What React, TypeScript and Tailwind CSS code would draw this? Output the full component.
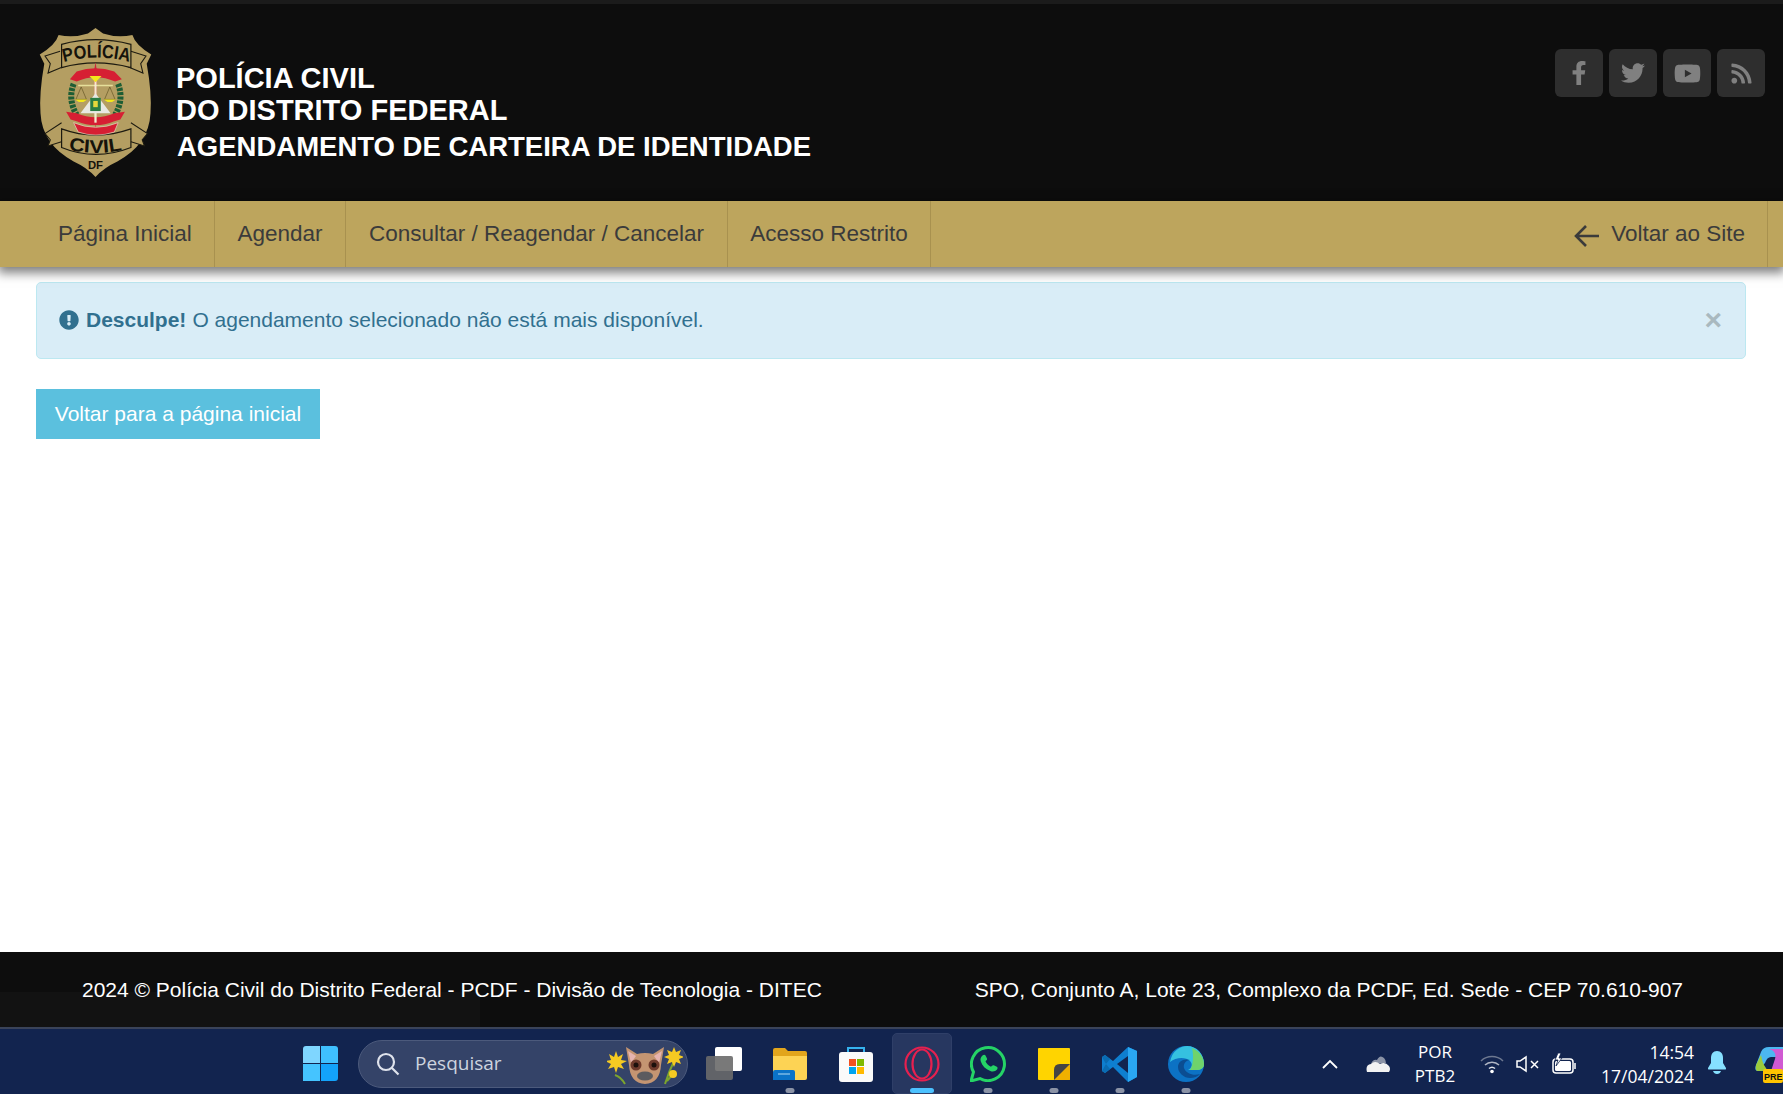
import React from "react";
import { FaFacebookF, FaTwitter, FaYoutube, FaRss, FaExclamationCircle } from "react-icons/fa";

function Badge() {
  return (
    <svg width="113" height="149" viewBox="0 0 150 192" preserveAspectRatio="none" className="block shrink-0">
      <defs>
        <path id="arc-top" d="M33 44 Q76 32 121 44" />
        <path id="arc-bottom" d="M39 157 Q76 165 112 157" />
      </defs>
      <path d="M75 0 L85 7 Q104 13 124 9 Q128 22 149 34 L143 46 Q150 84 148 110 Q146 150 104 172 Q86 180 75 192 Q64 180 46 172 Q4 150 2 110 Q0 84 7 46 L1 34 Q22 22 26 9 Q46 13 65 7 Z" fill="#b49e62" />
      <path d="M28 30 L8 36 L15 46 L12 58 L32 50 M122 30 L142 36 L135 46 L138 58 L118 50" fill="#b49e62" stroke="#1c1a10" strokeWidth="1.4" />
      <path d="M30 21 Q75 9 122 21 L122 51 Q75 39 30 51 Z" fill="#b49e62" stroke="#1c1a10" strokeWidth="1.6" />
      <text fontFamily="Liberation Sans" fontWeight="700" fontSize="24" fill="#15130b">
        <textPath href="#arc-top" textLength="88" lengthAdjust="spacingAndGlyphs">POLÍCIA</textPath>
      </text>
      <path d="M30 122 L8 136 L15 144 L12 152 L32 146 M122 122 L144 136 L137 144 L140 152 L120 146" fill="#b49e62" stroke="#1c1a10" strokeWidth="1.4" />
      <path d="M30 130 Q75 146 122 130 L122 154 Q75 172 30 154 Z" fill="#b49e62" stroke="#1c1a10" strokeWidth="1.6" />
      <text fontFamily="Liberation Sans" fontWeight="700" fontSize="24" fill="#15130b">
        <textPath href="#arc-bottom" textLength="72" lengthAdjust="spacingAndGlyphs">CIVIL</textPath>
      </text>
      <text x="75" y="182" textAnchor="middle" fontFamily="Liberation Sans" fontWeight="700" fontSize="15" fill="#15130b">DF</text>
      <path d="M46 72 Q38 92 50 112" fill="none" stroke="#1d5d34" strokeWidth="8" strokeDasharray="4 1.5" />
      <path d="M105 72 Q113 92 101 112" fill="none" stroke="#1d5d34" strokeWidth="8" strokeDasharray="4 1.5" />
      <path d="M75 44 L77 56 L75 140 L73 56 Z" fill="#c9273a" />
      <path d="M41 66 L50 56 Q75 48 100 56 L110 66 L101 69 Q75 58 50 69 Z" fill="#d61f33" />
      <path d="M36 108 L50 110 Q75 120 100 110 L114 108 L108 118 L100 120 Q75 130 50 120 L42 118 Z" fill="#d61f33" />
      <path d="M46 122 Q75 134 105 122 L100 134 Q75 142 52 134 Z" fill="#d61f33" stroke="#e9e1cd" strokeWidth="0.8" />
      <path d="M52 74 L98 74" stroke="#e5df9a" strokeWidth="2" />
      <path d="M75 62 L75 122" stroke="#f3eecd" strokeWidth="3" />
      <path d="M56 76 L49 92 L63 92 Z M94 76 L87 92 L101 92 Z" fill="none" stroke="#5a4d1e" strokeWidth="0.8" />
      <path d="M48 92 Q56 99 64 92 Z M86 92 Q94 99 102 92 Z" fill="#f2e81a" />
      <path d="M75 84 L95 110 L55 110 Z" fill="#e8e8e2" />
      <rect x="68" y="90" width="14" height="17" fill="#2a7d43" />
      <rect x="72" y="94" width="6" height="8" fill="#e6d83c" />
      <path d="M67 62 L83 62 L75 70 Z" fill="#f2e81a" />
    </svg>
  );
}

function Dot() {
  return <span className="absolute bottom-[1px] left-1/2 -translate-x-1/2 w-[9px] h-[5px] rounded-full bg-[#8b93a6]" />;
}

function Slot({ children, dot }: { children: React.ReactNode; dot?: boolean }) {
  return (
    <div className="relative w-[66px] h-full flex items-center justify-center">
      {children}
      {dot && <Dot />}
    </div>
  );
}

export default function App() {
  const nav = [
    { label: "Página Inicial", w: "w-[215px] pl-[58px]" },
    { label: "Agendar", w: "w-[131px] justify-center" },
    { label: "Consultar / Reagendar / Cancelar", w: "w-[382px] justify-center" },
    { label: "Acesso Restrito", w: "w-[203px] justify-center" },
  ];
  return (
    <div className="h-screen w-full flex flex-col overflow-hidden bg-white font-['Liberation_Sans',Arial,sans-serif]">
      <header className="h-[201px] shrink-0 bg-[#0d0d0d] border-t-[4px] border-[#1b1b1b] flex justify-between">
        <div className="flex items-start pl-[39px] pt-[24px]">
          <Badge />
          <div className="ml-[24px] pt-[34px] text-white font-bold">
            <div className="text-[29px] leading-[32px] whitespace-nowrap">POLÍCIA CIVIL</div>
            <div className="text-[29px] leading-[32px] whitespace-nowrap">DO DISTRITO FEDERAL</div>
            <div className="text-[27.5px] leading-[32px] mt-[5px] ml-[1px] whitespace-nowrap">AGENDAMENTO DE CARTEIRA DE IDENTIDADE</div>
          </div>
        </div>
        <div className="flex gap-[6px] pt-[45px] pr-[18px]">
          <a className="w-[48px] h-[48px] rounded-[6px] bg-[#2e2e2e] flex items-center justify-center text-[#808080] text-[24px]"><FaFacebookF /></a>
          <a className="w-[48px] h-[48px] rounded-[6px] bg-[#2e2e2e] flex items-center justify-center text-[#808080] text-[24px]"><FaTwitter /></a>
          <a className="w-[48px] h-[48px] rounded-[6px] bg-[#2e2e2e] flex items-center justify-center text-[#808080] text-[27px]"><FaYoutube /></a>
          <a className="w-[48px] h-[48px] rounded-[6px] bg-[#2e2e2e] flex items-center justify-center text-[#808080] text-[23px]"><FaRss /></a>
        </div>
      </header>

      <nav className="h-[66px] shrink-0 bg-[#bda55d] flex justify-between shadow-[0_4px_10px_2px_rgba(0,0,0,0.5)] text-[#3b3b3b] text-[22.5px] relative">
        <div className="flex">
          {nav.map((n) => (
            <a key={n.label} className={`${n.w} flex items-center border-r border-[#a8914f] whitespace-nowrap`}>
              {n.label}
            </a>
          ))}
        </div>
        <a className="flex items-center border-r border-[#a8914f] mr-[15px] pr-[22px] whitespace-nowrap">
          <svg width="26" height="24" viewBox="0 0 26 24" fill="none" stroke="#3b3b3b" strokeWidth="2.6" className="mr-[11px] mt-[3px]">
            <path d="M25 12H2M12 2L2 12l10 10" />
          </svg>
          Voltar ao Site
        </a>
      </nav>

      <main className="flex-1 pl-[36px] pr-[37px] pt-[15px]">
        <div className="h-[77px] rounded-[5px] bg-[#d9edf7] border border-[#bce8f1] text-[#31708f] text-[21px] flex items-center pb-[2px] pl-[22px] pr-[23px]">
          <FaExclamationCircle className="text-[20px] mr-[7px] shrink-0" />
          <b>Desculpe!</b>
          <span className="ml-[6px]">O agendamento selecionado não está mais disponível.</span>
          <span className="ml-auto text-[#a9b9bf] text-[30px] font-bold leading-none">×</span>
        </div>
        <a className="mt-[30px] inline-flex items-center h-[50px] w-[284px] justify-center bg-[#5bc0de] text-white text-[21px]">
          Voltar para a página inicial
        </a>
      </main>

      <footer className="relative h-[75px] shrink-0 bg-[#0d0d0d] text-white text-[21px] flex items-center">
        <span className="absolute left-0 bottom-0 w-[480px] h-[35px] bg-[#121212]" />
        <span className="relative ml-[82px] whitespace-nowrap">2024 © Polícia Civil do Distrito Federal - PCDF - Divisão de Tecnologia - DITEC</span>
        <span className="relative ml-auto mr-[100px] whitespace-nowrap">SPO, Conjunto A, Lote 23, Complexo da PCDF, Ed. Sede - CEP 70.610-907</span>
      </footer>

      <div className="h-[67px] shrink-0 bg-[#12244f] border-t-[2px] border-[#3a4359] pt-[4px] flex items-center text-white font-['Open_Sans','Noto_Sans',sans-serif] relative">
        <div className="ml-[303px] w-[35px] h-[35px] grid grid-cols-2 gap-[1.5px] shrink-0">
          <span className="bg-[#7fd6ff] rounded-tl-[3px]" />
          <span className="bg-[#3fc0ff] rounded-tr-[3px]" />
          <span className="bg-[#45c4ff]" />
          <span className="bg-[#13a3fb] rounded-br-[3px]" />
        </div>
        <div className="ml-[20px] w-[330px] h-[48px] rounded-full bg-[#344368] border border-[#4c5a7c] flex items-center pl-[17px] relative shrink-0">
          <svg width="24" height="24" viewBox="0 0 24 24" fill="none" stroke="#dfe3ec" strokeWidth="2.2">
            <circle cx="10" cy="10" r="8" />
            <path d="M16 16l6.5 6.5" />
          </svg>
          <span className="ml-[15px] text-[19px] text-[#cdd3df]">Pesquisar</span>
          <svg width="76" height="42" viewBox="0 0 76 42" className="absolute right-[4px] top-[2px]">
            <path d="M8 32Q14 34 18 41M68 16Q62 28 58 41M66 31L60 38" fill="none" stroke="#7da52d" strokeWidth="2" />
            <g fill="#f5ca22">
              <path d="M9 8l2 6 5-3-2 6 6 1-6 3 3 5-6-2-2 6-2-6-6 2 3-5-6-3 6-1-2-6 5 3z" />
              <circle cx="9" cy="19" r="5" />
              <path d="M67 4l2 5 5-2-2 5 5 2-5 2 2 5-5-2-2 5-2-5-5 2 2-5-5-2 5-2-2-5 5 2z" />
              <circle cx="67" cy="14" r="5" />
              <circle cx="66" cy="31" r="4" />
            </g>
            <path d="M19 4L30 11Q38 9 46 11L57 4L54 22Q53 40 38 41Q23 40 22 22Z" fill="#c49572" />
            <path d="M21 8L29 13L24 20ZM55 8L47 13L52 20Z" fill="#e6b4b0" />
            <circle cx="29" cy="22" r="5.5" fill="#6f3b2d" />
            <circle cx="47" cy="22" r="5.5" fill="#6f3b2d" />
            <circle cx="29" cy="22" r="2.5" fill="#1c100c" />
            <circle cx="47" cy="22" r="2.5" fill="#1c100c" />
            <ellipse cx="38" cy="33" rx="8" ry="4.5" fill="#5b5b5f" />
          </svg>
        </div>
        <div className="ml-[3px] flex h-full items-center shrink-0">
          <Slot>
            <div className="relative w-[36px] h-[34px]">
              <span className="absolute left-[9px] top-0 w-[27px] h-[24px] rounded-[2px] bg-white" />
              <span className="absolute left-0 top-[9px] w-[27px] h-[24px] rounded-[2px] bg-[#6a6a6a]/90" />
            </div>
          </Slot>
          <Slot dot>
            <svg width="36" height="34" viewBox="0 0 36 34">
              <path d="M1 3Q1 1 3 1H13L16 4H33Q35 4 35 6V10H1Z" fill="#e2a51c" />
              <path d="M1 9H35V31Q35 33 33 33H3Q1 33 1 31Z" fill="#fdd354" />
              <path d="M1 33V25Q1 23 3 23H21Q23 23 23 25V33Z" fill="#0a73c8" />
              <path d="M6 27H18" stroke="#7ab8e6" strokeWidth="1.5" />
            </svg>
          </Slot>
          <Slot>
            <svg width="36" height="36" viewBox="0 0 36 36">
              <path d="M10 8V2H26V8" fill="none" stroke="#35b2ee" strokeWidth="2" />
              <rect x="1" y="6" width="34" height="30" rx="3" fill="#fafafa" />
              <rect x="11" y="13" width="7" height="7" fill="#f25022" />
              <rect x="19" y="13" width="7" height="7" fill="#7fba00" />
              <rect x="11" y="21" width="7" height="7" fill="#00a4ef" />
              <rect x="19" y="21" width="7" height="7" fill="#ffb900" />
            </svg>
          </Slot>
          <div className="relative w-[66px] h-full flex items-center justify-center">
            <span className="absolute inset-x-[3px] top-0 bottom-0 rounded-[5px] bg-[#273760] border border-[#2f3f68]" />
            <svg width="36" height="36" viewBox="0 0 36 36" fill="none" stroke="#e6204f" strokeWidth="2.2" className="relative">
              <circle cx="18" cy="18" r="16.5" />
              <ellipse cx="18" cy="18" rx="9.5" ry="14.5" />
            </svg>
            <span className="absolute bottom-[1px] left-1/2 -translate-x-1/2 w-[24px] h-[5px] rounded-full bg-[#4cc2ff]" />
          </div>
          <Slot dot>
            <svg width="36" height="36" viewBox="0 0 36 36">
              <path d="M1 35L3.5 26A16.5 16.5 0 1 1 10 32.5Z" fill="none" stroke="#25d366" strokeWidth="3" />
              <path d="M12.5 9.5c1-1 2.500-1 3 0l1.500 3c.3.7 0 1.300-.5 1.800l-1 1c1 2.500 3 4.500 5.500 5.500l1-1c.5-.5 1.200-.8 1.800-.5l3 1.500c1 .5 1 2 0 3-1.500 1.700-4 2.200-6.500 1.200-5-2-8-5-9.500-9.500-.8-2.500 0-4.500 1.700-6z" fill="#25d366" />
            </svg>
          </Slot>
          <Slot dot>
            <svg width="32" height="32" viewBox="0 0 32 32">
              <path d="M1 0H31Q32 0 32 1V31Q32 32 31 32H1Q0 32 0 31V1Q0 0 1 0Z" fill="#ffd400" />
              <path d="M16 32V22Q16 16 22 16H32V31Q32 32 31 32Z" fill="#f0b000" />
              <path d="M16 32V22Q16 16 22 16H32Z" fill="#444" />
            </svg>
          </Slot>
          <Slot dot>
            <svg width="36" height="36" viewBox="0 0 36 36">
              <path d="M26 1L35 5V31L26 36L11 21L3 27L0 25V11L3 9L11 15Z" fill="#0e7fd0" />
              <path d="M26 1L35 5V31L26 36Z" fill="#2aa7f2" />
              <path d="M26 10L15 18L26 27Z" fill="#12244f" />
              <path d="M0 11L3 9L8 13L4 18L8 23L3 27L0 25L4 18Z" fill="#0a6cb3" />
            </svg>
          </Slot>
          <Slot dot>
            <svg width="36" height="36" viewBox="0 0 36 36">
              <circle cx="18" cy="18" r="18" fill="#0c72c4" />
              <path d="M2 16C4 5 12 0 19 0C29 0 36 8 36 18C36 22 33 24 28 24H20C24 22 25 18 22 15C18 11 8 11 2 16Z" fill="#35c1e0" />
              <path d="M24 2C31 5 36 11 36 18C36 22 33 24 28 24H22C25 20 26 10 24 2Z" fill="#6fd36b" />
              <path d="M10 21C10 27 16 32 22 32C26 32 30 30.500 32 28C26 30 18 28 16 22C15 18 18 14 22 14C16 12 10 15 10 21Z" fill="#0b4d92" />
            </svg>
          </Slot>
        </div>

        <div className="ml-[103px] w-[16px] flex justify-center shrink-0">
          <svg width="16" height="10" viewBox="0 0 16 10" fill="none" stroke="#fff" strokeWidth="1.800"><path d="M1 9l7-7 7 7" /></svg>
        </div>
        <svg width="25" height="18" viewBox="0 0 25 18" className="ml-[28px] shrink-0">
          <path d="M5 9Q7 4 11 5Q14 -1 18 3Q20 5 20 8Z" fill="#8b93a6" />
          <path d="M1 17Q-1 10 5 9Q9 5 14 9Q19 6 23 11Q25 14 23 17Z" fill="#f2f2f2" />
        </svg>
        <div className="ml-[8px] w-[72px] text-center text-[17px] leading-[24px] shrink-0">
          <div>POR</div>
          <div>PTB2</div>
        </div>
        <svg width="24" height="20" viewBox="0 0 24 20" fill="none" stroke="#6d7890" strokeWidth="1.500" className="ml-[9px] shrink-0">
          <path d="M1 7a16 16 0 0 1 22 0" />
          <path d="M5 11a10 10 0 0 1 14 0" stroke="#b0b6c4" />
          <path d="M9 14.500a4.500 4.500 0 0 1 6 0" stroke="#e0e3ea" />
          <circle cx="12" cy="17.500" r="1.800" fill="#fff" stroke="none" />
        </svg>
        <svg width="24" height="18" viewBox="0 0 24 18" fill="none" stroke="#fff" strokeWidth="1.500" className="ml-[12px] shrink-0">
          <path d="M1 6v6h3l6 4V2L4 6z" />
          <path d="M15 6l7 7M22 6l-7 7" />
        </svg>
        <svg width="25" height="22" viewBox="0 0 25 22" fill="none" stroke="#fff" strokeWidth="1.500" className="ml-[12px] shrink-0">
          <rect x="1" y="6" width="20" height="14" rx="3" />
          <rect x="3" y="8" width="16" height="10" rx="1.500" fill="#fff" stroke="none" />
          <path d="M23 10v6" />
          <path d="M6 0L3 7h3L4 13l6-8H7l2-5z" fill="#fff" stroke="#12244f" strokeWidth="0.800" />
        </svg>
        <div className="mr-[89px] text-right text-[17.5px] leading-[24px] shrink-0 absolute right-0">
          <div>14:54</div>
          <div>17/04/2024</div>
        </div>
        <svg width="20" height="24" viewBox="0 0 20 24" fill="#86e0ff" className="absolute right-[56px] top-[22px]">
          <path d="M10 0c-4 0-6 3-6 7v5l-3 5c0 1 0 1.500 1 1.500h16c1 0 1-.5 1-1.500l-3-5V7c0-4-2-7-6-7z" />
          <path d="M6 20h8q-1 3-4 3t-4-3z" />
        </svg>
        <svg width="28" height="36" viewBox="0 0 28 36" className="absolute right-0 top-[18px]">
          <path d="M3 24Q-1 24 1 18L6 5Q8 0 14 0H28V10H16Q12 10 10 16Z" fill="#4cb7ef" />
          <path d="M3 24Q0 24 1 18L6 8Q8 20 14 24Z" fill="#9ccb3c" />
          <path d="M14 2H28V24H16L20 12Q22 4 14 2Z" fill="#d05ad2" />
          <rect x="8" y="22" width="20" height="14" rx="2" fill="#ffc400" />
          <text x="9" y="33" fontFamily="Liberation Sans" fontWeight="700" fontSize="9" fill="#111">PRE</text>
        </svg>
      </div>
    </div>
  );
}
